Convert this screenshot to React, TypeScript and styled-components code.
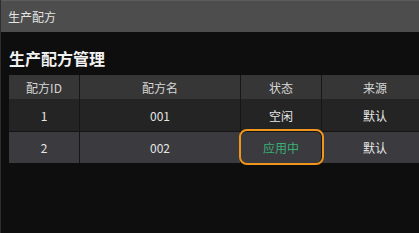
import React from 'react';
import styled, { createGlobalStyle } from 'styled-components';

const GlobalStyle = createGlobalStyle`
  html, body {
    margin: 0;
    padding: 0;
    background: #0e0e0e;
  }
  body {
    font-family: "Noto Sans CJK SC", "Noto Sans", sans-serif;
  }
`;

const Window = styled.div`
  width: 419px;
  height: 233px;
  box-sizing: border-box;
  background: #0e0e0e;
  border-left: 1px solid #2e2e2e;
  display: flex;
  flex-direction: column;
  overflow: hidden;
`;

const TitleBar = styled.div`
  height: 32px;
  box-sizing: border-box;
  background: #4d4d4d;
  border-top: 1px solid #5c5c5c;
  padding-left: 7px;
  display: flex;
  align-items: center;
  font-size: 12px;
  color: #e4e4e4;
`;

const Content = styled.div`
  padding: 14px 0 0 8px;
`;

const Heading = styled.h2`
  margin: 0 0 5px;
  font-size: 16px;
  line-height: 24px;
  font-weight: 700;
  color: #f2f2f2;
`;

const Table = styled.table`
  border-collapse: separate;
  border-spacing: 0;
  table-layout: fixed;
  width: 420px;
  font-size: 12px;
`;

const HeadCell = styled.th<{ $w?: number }>`
  width: ${(p) => (p.$w ? `${p.$w}px` : 'auto')};
  height: 24px;
  padding: 0;
  background: #363636;
  color: #d6d6d6;
  font-weight: 400;
  text-align: center;
  border-right: 1px solid #161616;
`;

const Row = styled.tr<{ $alt?: boolean }>`
  & > td {
    height: ${(p) => (p.$alt ? '31px' : '32px')};
    background: ${(p) => (p.$alt ? '#3a3a3f' : '#242424')};
    border-top: ${(p) => (p.$alt ? '1px solid #141414' : 'none')};
  }
`;

const Cell = styled.td<{ $active?: boolean; $green?: boolean }>`
  padding: 0;
  text-align: center;
  color: ${(p) => (p.$green ? '#3bae76' : '#e6e6e6')};
  border-right: 1px solid #161616;
  border-radius: ${(p) => (p.$active ? '6px' : '0')};
  outline: ${(p) => (p.$active ? '2px solid #f0961e' : 'none')};
`;

const rows = [
  { id: '1', name: '001', status: '空闲', source: '默认', active: false },
  { id: '2', name: '002', status: '应用中', source: '默认', active: true },
];

export default function App() {
  return (
    <>
      <GlobalStyle />
      <Window>
        <TitleBar>生产配方</TitleBar>
        <Content>
          <Heading>生产配方管理</Heading>
          <Table>
            <thead>
              <tr>
                <HeadCell $w={70}>配方ID</HeadCell>
                <HeadCell $w={160}>配方名</HeadCell>
                <HeadCell $w={80}>状态</HeadCell>
                <HeadCell>来源</HeadCell>
              </tr>
            </thead>
            <tbody>
              {rows.map((r, i) => (
                <Row key={r.id} $alt={i === 1}>
                  <Cell>{r.id}</Cell>
                  <Cell>{r.name}</Cell>
                  <Cell $active={r.active} $green={r.active}>
                    {r.status}
                  </Cell>
                  <Cell>{r.source}</Cell>
                </Row>
              ))}
            </tbody>
          </Table>
        </Content>
      </Window>
    </>
  );
}
